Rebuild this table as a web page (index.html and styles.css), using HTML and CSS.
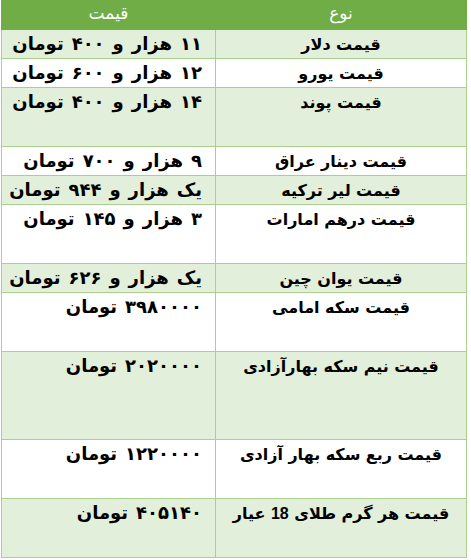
FILE: index.html
```html
<!DOCTYPE html>
<html lang="fa" dir="rtl">
<head>
<meta charset="utf-8">
<title>قیمت ارز و سکه</title>
<link rel="stylesheet" href="styles.css">
</head>
<body>
<table class="prices">
  <colgroup><col class="c-type"><col class="c-price"></colgroup>
  <thead>
    <tr class="r1"><th>نوع</th><th>قیمت</th></tr>
  </thead>
  <tbody>
    <tr class="r1 band"><td>قیمت دلار</td><td class="p">۱۱ هزار و ۴۰۰ تومان</td></tr>
    <tr class="r1"><td>قیمت یورو</td><td class="p">۱۲ هزار و ۶۰۰ تومان</td></tr>
    <tr class="r2 band"><td>قیمت پوند</td><td class="p">۱۴ هزار و ۴۰۰ تومان</td></tr>
    <tr class="r1"><td>قیمت دینار عراق</td><td class="p">۹ هزار و ۷۰۰ تومان</td></tr>
    <tr class="r1 band"><td>قیمت لیر ترکیه</td><td class="p">یک هزار و ۹۴۴ تومان</td></tr>
    <tr class="r2"><td>قیمت درهم امارات</td><td class="p">۳ هزار و ۱۴۵ تومان</td></tr>
    <tr class="r1 band"><td>قیمت یوان چین</td><td class="p">یک هزار و ۶۲۶ تومان</td></tr>
    <tr class="r2"><td>قیمت سکه امامی</td><td class="p">۳۹۸۰۰۰۰ تومان</td></tr>
    <tr class="r3 band"><td>قیمت نیم سکه بهارآزادی</td><td class="p">۲۰۲۰۰۰۰ تومان</td></tr>
    <tr class="r2"><td>قیمت ربع سکه بهار آزادی</td><td class="p">۱۲۲۰۰۰۰ تومان</td></tr>
    <tr class="r2 band"><td>قیمت هر گرم طلای 18 عیار</td><td class="p">۴۰۵۱۴۰ تومان</td></tr>
  </tbody>
</table>
</body>
</html>
```
FILE: styles.css
```css
html, body {
  margin: 0;
  padding: 0;
  background: #ffffff;
}
body {
  font-family: "Liberation Sans", "DejaVu Sans", Arial, sans-serif;
  direction: rtl;
  padding: 0 4px 0 0;
}
.prices {
  border-collapse: collapse;
  table-layout: fixed;
  width: 465px;
  margin-left: auto;
  margin-right: 0;
}
.c-type { width: 251px; }
.c-price { width: 214px; }
.prices th {
  background: #70ad47;
  color: #ffffff;
  font-weight: normal;
  font-size: 17px;
  line-height: 22px;
  text-align: center;
  vertical-align: top;
  padding: 2px 0 0 0;
  border: 1px solid #70ad47;
}
.prices td {
  border: 1px solid #a9d08e;
  font-size: 16px;
  font-weight: bold;
  color: #000000;
  vertical-align: top;
  text-align: center;
  padding: 4px 0 0 0;
  line-height: 21px;
  word-spacing: 1px;
  white-space: nowrap;
}
.prices td.p {
  text-align: right;
  padding: 3px 13px 0 0;
  font-size: 18px;
  line-height: 22px;
  word-spacing: 3px;
}
.band td { background: #e2efda; }
.r1 { height: 29px; }
.r2 { height: 59px; }
.r3 { height: 88px; }
```
